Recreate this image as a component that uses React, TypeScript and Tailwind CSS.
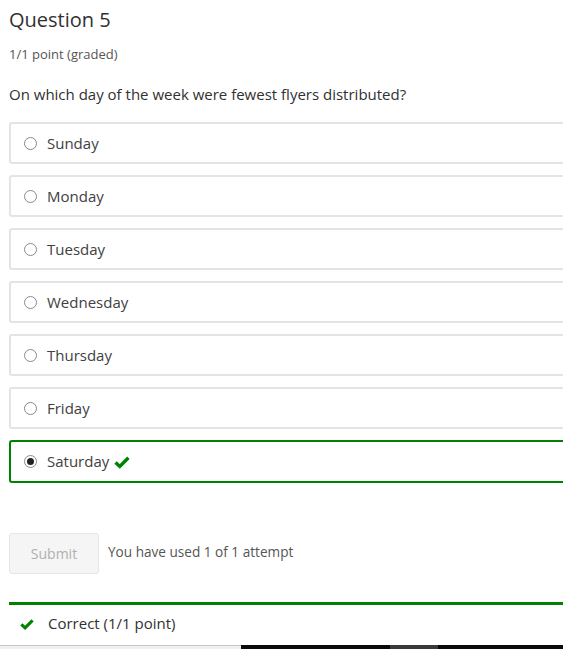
import React from 'react';

const days = ['Sunday', 'Monday', 'Tuesday', 'Wednesday', 'Thursday', 'Friday', 'Saturday'];

function Check({ className }: { className?: string }) {
  return (
    <svg viewBox="0 0 16 16" className={className} aria-hidden="true">
      <path d="M1.5 8.4 L5.8 12.4 L14.4 3.8" fill="none" stroke="#008100" strokeWidth="3.4" strokeLinecap="butt" />
    </svg>
  );
}

export default function App() {
  return (
    <div className="w-[563px] h-[649px] bg-white overflow-hidden flex flex-col font-['Open_Sans',sans-serif] text-[#333]">
      <div className="pl-[9px] flex-1">
        <h2 className="text-[20px] leading-none pt-[10px] text-[#313131]">Question 5</h2>
        <div className="text-[13px] text-[#555] mt-[15px]">1/1 point (graded)</div>
        <p className="text-[15px] text-[#313131] mt-[18px]">On which day of the week were fewest flyers distributed?</p>

        <div className="mt-[17px] flex flex-col gap-[11px]">
          {days.map((d) => {
            const picked = d === 'Saturday';
            return (
              <div
                key={d}
                className={
                  picked
                    ? 'h-[43px] border-2 border-r-0 border-[#008100] rounded-l-[3px] flex items-center'
                    : 'h-[42px] border-2 border-r-0 border-[#e4e4e4] rounded-l-[3px] flex items-center'
                }
              >
                {picked ? (
                  <span className="ml-[13px] w-[13px] h-[13px] rounded-full border border-[#8a8a8a] flex items-center justify-center">
                    <span className="w-[7px] h-[7px] rounded-full bg-[#222]" />
                  </span>
                ) : (
                  <span className="ml-[13px] w-[13px] h-[13px] rounded-full border border-[#8a8a8a]" />
                )}
                <span className="ml-[10px] text-[15px] text-[#414141]">{d}</span>
                {picked && <Check className="ml-[5px] w-[16px] h-[16px]" />}
              </div>
            );
          })}
        </div>

        <div className="mt-[50px] flex items-start">
          <button className="w-[90px] h-[41px] bg-[#f5f5f5] border border-[#e6e6e6] rounded-[3px] text-[14px] text-[#b0b0b0]">
            Submit
          </button>
          <span className="ml-[9px] mt-[9px] text-[13.6px] text-[#555]">You have used 1 of 1 attempt</span>
        </div>

        <div className="mt-[28px] border-t-[3px] border-[#008100] h-[40px] flex items-center">
          <Check className="ml-[11px] w-[14px] h-[14px]" />
          <span className="ml-[14px] text-[15px] text-[#313131]">Correct (1/1 point)</span>
        </div>
      </div>
      <div className="h-[4px] flex">
        <div className="w-[241px] bg-[#f0f0f0] border-t border-[#c8c8c8]" />
        <div className="w-[149px] bg-[#0a0a0a]" />
        <div className="w-[48px] bg-[#3a3a3a]" />
        <div className="flex-1 bg-[#0a0a0a]" />
      </div>
    </div>
  );
}
